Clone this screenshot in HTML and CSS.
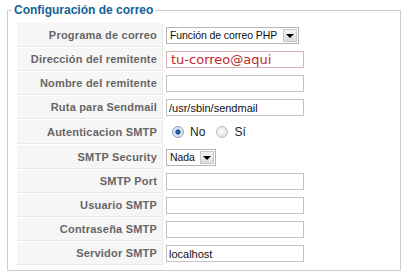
FILE: index.html
```html
<!DOCTYPE html>
<html lang="es">
<head>
	<meta charset="UTF-8">
	<title>Configuración de correo</title>
	<link rel="stylesheet" href="styles.css">
</head>
<body>
<fieldset class="adminform">
	<legend>Configuración de correo</legend>
	<table class="admintable">
		<tr class="row-select">
			<td class="key">Programa de correo</td>
			<td>
				<span class="select select-wide">
					<span class="select-text">Función de correo PHP</span>
					<span class="select-arrow"></span>
				</span>
			</td>
		</tr>
		<tr>
			<td class="key">Dirección del remitente</td>
			<td><input class="inputbox mailfrom" type="text" value="tu-correo@aqui"></td>
		</tr>
		<tr>
			<td class="key">Nombre del remitente</td>
			<td><input class="inputbox" type="text" value=""></td>
		</tr>
		<tr>
			<td class="key">Ruta para Sendmail</td>
			<td><input class="inputbox" type="text" value="/usr/sbin/sendmail"></td>
		</tr>
		<tr class="row-radio">
			<td class="key">Autenticacion SMTP</td>
			<td>
				<label class="radio"><input type="radio" name="smtpauth" checked> No</label>
				<label class="radio"><input type="radio" name="smtpauth"> Sí</label>
			</td>
		</tr>
		<tr class="row-select">
			<td class="key">SMTP Security</td>
			<td>
				<span class="select select-small">
					<span class="select-text">Nada</span>
					<span class="select-arrow"></span>
				</span>
			</td>
		</tr>
		<tr>
			<td class="key">SMTP Port</td>
			<td><input class="inputbox" type="text" value=""></td>
		</tr>
		<tr>
			<td class="key">Usuario SMTP</td>
			<td><input class="inputbox" type="text" value=""></td>
		</tr>
		<tr>
			<td class="key">Contraseña SMTP</td>
			<td><input class="inputbox" type="password" value=""></td>
		</tr>
		<tr>
			<td class="key">Servidor SMTP</td>
			<td><input class="inputbox" type="text" value="localhost"></td>
		</tr>
	</table>
</fieldset>
</body>
</html>
```

FILE: styles.css
```css
* {
	font-family: 'Liberation Sans', Arial, sans-serif;
}
body {
	margin: 0;
	background: #fff;
}
fieldset.adminform {
	margin: 3px 1px 0 7px;
	padding: 5px 8px 4px 8px;
	border: 1px solid #ccc;
}
fieldset.adminform legend {
	margin-left: -4px;
	padding: 0 2px;
	font-size: 12px;
	line-height: 14px;
	font-weight: bold;
	color: #146295;
}
table.admintable {
	width: 100%;
	border-collapse: separate;
	border-spacing: 1px;
}
table.admintable td {
	box-sizing: border-box;
	height: 23px;
	padding: 3px 2px;
	vertical-align: middle;
	font-size: 11px;
}
table.admintable td.key {
	width: 146px;
	padding: 2px 5px 2px 1px;
	background-color: #f6f6f6;
	border-bottom: 1px solid #e9e9e9;
	border-right: 1px solid #e9e9e9;
	text-align: right;
	font-weight: bold;
	letter-spacing: 0.2px;
	color: #666;
	white-space: nowrap;
}
table.admintable tr.row-radio td,
table.admintable tr.row-select td {
	height: 24px;
}
.inputbox {
	display: block;
	box-sizing: border-box;
	width: 138px;
	height: 17px;
	margin: 0;
	padding: 0 2px;
	border: 1px solid #c3c3c3;
	font-size: 11px;
	color: #111;
	outline: none;
}
.inputbox.mailfrom {
	padding-left: 4px;
	border-color: #d9b3b3;
	font-family: 'DejaVu Sans', sans-serif;
	font-size: 13px;
	color: #c0282d;
}
/* selects estilo XP */
.select {
	display: flex;
	align-items: center;
	box-sizing: border-box;
	height: 17px;
	border: 1px solid #b5b5b5;
	background: #fff;
	font-size: 11px;
	color: #111;
}
.select-wide {
	width: 133px;
}
.select-small {
	width: 50px;
}
.select-text {
	flex: 1;
	overflow: hidden;
	padding-left: 3px;
	font-size: 10.5px;
	letter-spacing: -0.1px;
	white-space: nowrap;
}
.select-arrow {
	display: flex;
	align-items: center;
	justify-content: center;
	flex: none;
	box-sizing: border-box;
	width: 14px;
	height: 13px;
	margin-right: 1px;
	border: 1px solid #c8c8c8;
	background: linear-gradient(180deg, #f4f4f4 0%, #dcdcdc 100%);
}
.select-arrow::after {
	content: '';
	border-left: 4px solid transparent;
	border-right: 4px solid transparent;
	border-top: 4px solid #000;
	margin-top: 1px;
}
.radio {
	display: inline-flex;
	align-items: center;
	margin-right: 4px;
	margin-left: 4px;
	font-size: 12px;
	color: #222;
}
.radio + .radio {
	margin-left: 2px;
}
.radio input {
	appearance: none;
	-webkit-appearance: none;
	box-sizing: border-box;
	width: 12px;
	height: 12px;
	margin: 0 6px 0 2px;
	border: 1px solid #b8bcc4;
	border-radius: 50%;
	background: radial-gradient(circle at 40% 40%, #fff 0%, #e6e6e6 60%, #cfcfcf 100%);
}
.radio input:checked {
	background: radial-gradient(circle, #2d6fbe 0%, #1d4f8f 32%, #d8e4f2 42%, #e8eef6 100%);
	border-color: #8aa2c4;
}
```
